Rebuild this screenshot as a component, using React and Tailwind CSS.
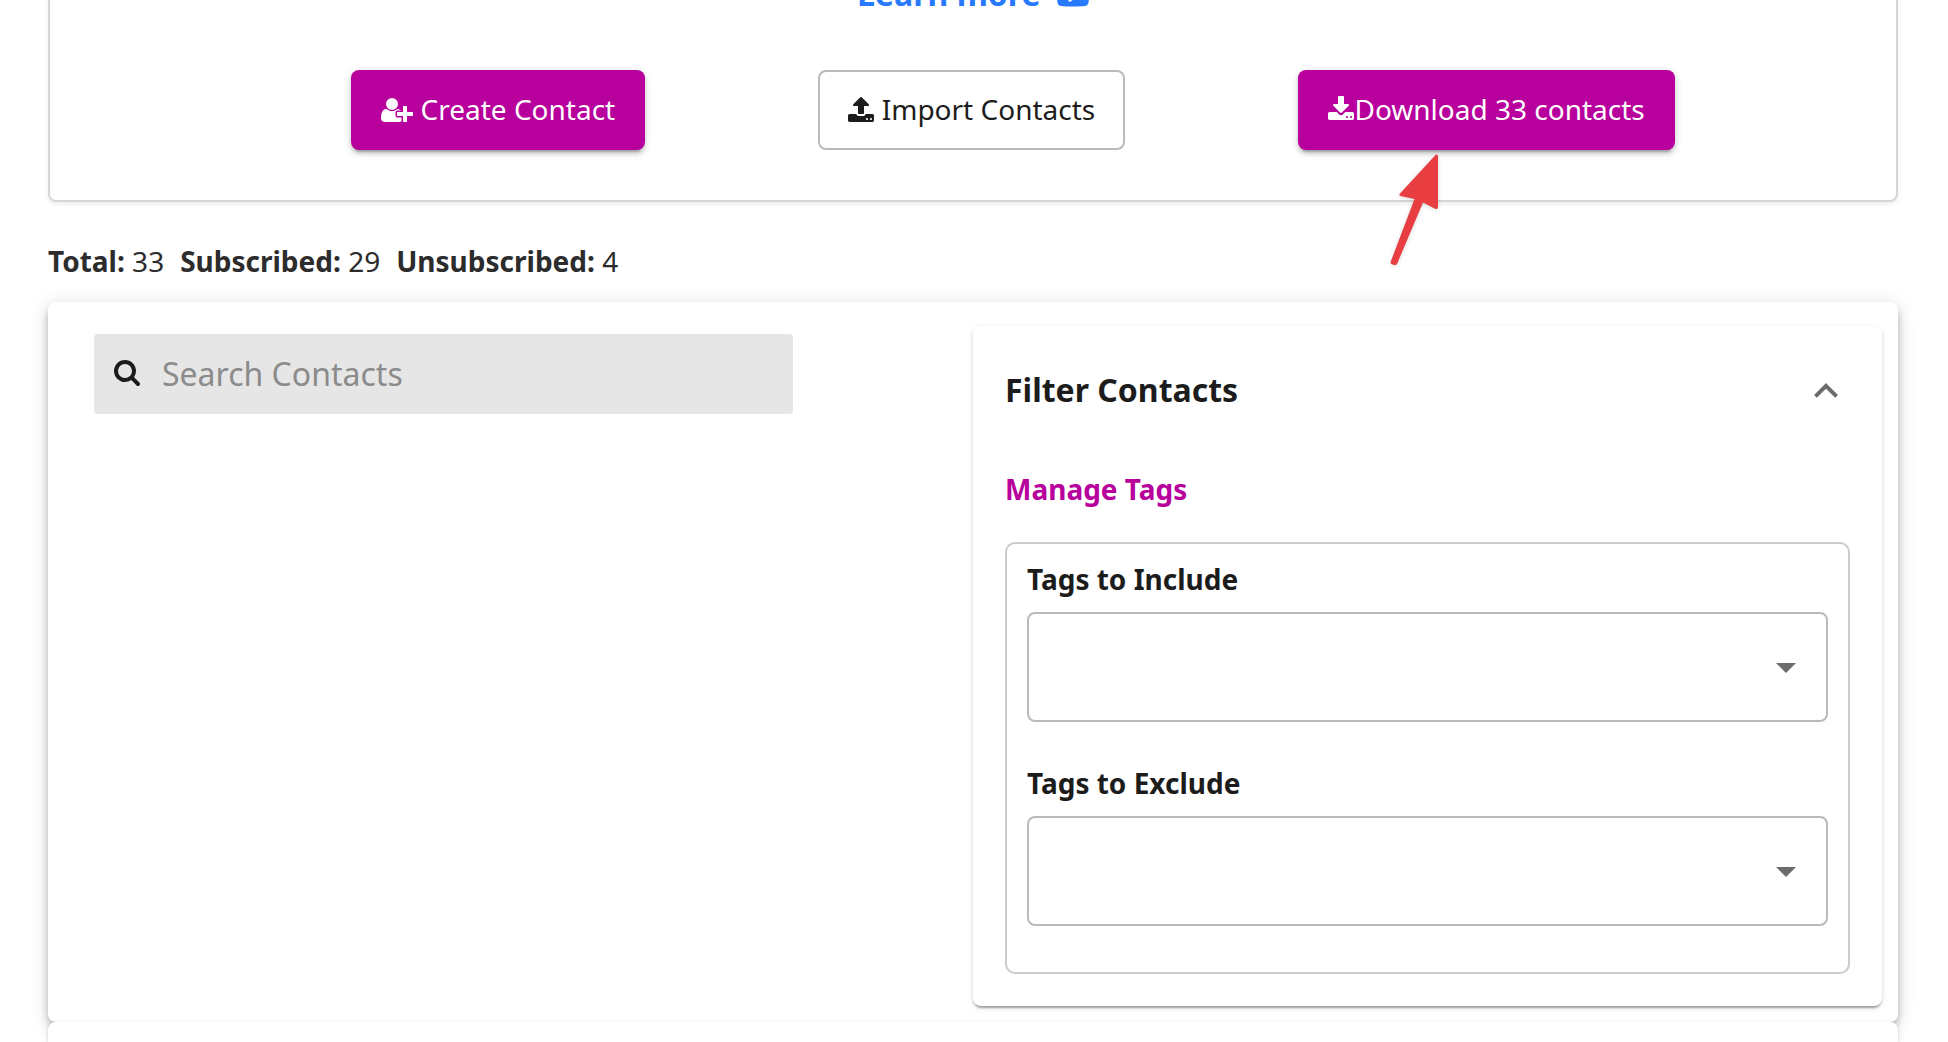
import { useState } from "react";

const icons = {
  userPlus: {
    viewBox: "0 0 2048 1792",
    d: "M704 896q-159 0-271.500-112.500t-112.500-271.500 112.500-271.500 271.500-112.500 271.500 112.500 112.500 271.500-112.500 271.500-271.500 112.500zm960 128h352q13 0 22.500 9.500t9.500 22.500v192q0 13-9.500 22.500t-22.500 9.500h-352v352q0 13-9.500 22.500t-22.500 9.500h-192q-13 0-22.500-9.500t-9.500-22.500v-352h-352q-13 0-22.500-9.500t-9.500-22.500v-192q0-13 9.500-22.500t22.500-9.500h352v-352q0-13 9.500-22.500t22.500-9.500h192q13 0 22.500 9.500t9.500 22.500v352zm-736 224q0 52 38 90t90 38h256v238q-68 50-171 50h-874q-121 0-194-69t-73-190q0-53 3.500-103.500t14-109 26.500-108.500 43-97.500 62-81 85.500-53.500 111.500-20q19 0 39 17 79 61 154.500 91.500t164.500 30.500 164.500-30.500 154.500-91.500q20-17 39-17 132 0 217 96h-223q-52 0-90 38t-38 90v192z",
  },
  upload: {
    viewBox: "64 0 1664 1792",
    d: "M1344 1472q0-26-19-45t-45-19-45 19-19 45 19 45 45 19 45-19 19-45zm256 0q0-26-19-45t-45-19-45 19-19 45 19 45 45 19 45-19 19-45zm128-224v320q0 40-28 68t-68 28h-1472q-40 0-68-28t-28-68v-320q0-40 28-68t68-28h427q21 56 70.500 92t110.500 36h256q61 0 110.500-36t70.500-92h427q40 0 68 28t28 68zm-325-648q-17 40-59 40h-256v448q0 26-19 45t-45 19h-256q-26 0-45-19t-19-45v-448h-256q-42 0-59-40-17-39 14-69l448-448q18-19 45-19t45 19l448 448q31 30 14 69z",
  },
  download: {
    viewBox: "64 0 1664 1792",
    d: "M1344 1344q0-26-19-45t-45-19-45 19-19 45 19 45 45 19 45-19 19-45zm256 0q0-26-19-45t-45-19-45 19-19 45 19 45 45 19 45-19 19-45zm128-224v320q0 40-28 68t-68 28h-1472q-40 0-68-28t-28-68v-320q0-40 28-68t68-28h465l135 136q58 56 136 56t136-56l136-136h464q40 0 68 28t28 68zm-325-569q17 41-14 70l-448 448q-18 19-45 19t-45-19l-448-448q-31-29-14-70 17-39 59-39h256v-448q0-26 19-45t45-19h256q26 0 45 19t19 45v448h256q42 0 59 39z",
  },
  search: {
    viewBox: "64 0 1664 1792",
    d: "M1216 832q0-185-131.500-316.500t-316.500-131.500-316.500 131.500-131.500 316.500 131.500 316.500 316.500 131.500 316.500-131.500 131.500-316.500zm512 832q0 52-38 90t-90 38q-54 0-90-38l-343-342q-179 124-399 124-143 0-273.500-55.500t-225-150-150-225-55.500-273.500 55.500-273.500 150-225 225-150 273.500-55.500 273.500 55.500 225 150 150 225 55.500 273.500q0 220-124 399l343 343q37 37 37 90z",
  },
  video: {
    viewBox: "0 0 1792 1792",
    d: "M1280 896q0-37-30-54l-512-320q-31-20-65-2-33 18-33 56v640q0 38 33 56 16 8 31 8 20 0 34-10l512-320q30-17 30-54zm512 0q0 96-1 150t-8.500 136.500-22.500 147.500q-16 73-69 123t-124 58q-222 25-671 25t-671-25q-71-8-124.500-58t-69.500-123q-14-65-21.500-147.500t-8.500-136.500-1-150 1-150 8.500-136.500 22.500-147.500q16-73 69-123t124-58q222-25 671-25t671 25q71 8 124.500 58t69.500 123q14 65 21.500 147.500t8.500 136.500 1 150z",
  },
};

function Icon({ name, className }) {
  const { viewBox, d } = icons[name];
  return (
    <svg
      viewBox={viewBox}
      fill="currentColor"
      aria-hidden="true"
      className={className}
    >
      <path d={d} />
    </svg>
  );
}

function PointerArrow() {
  return (
    <svg
      viewBox="0 0 48 112"
      aria-hidden="true"
      className="absolute top-[84px] left-[92px] w-12 h-28 overflow-visible drop-shadow-sm pointer-events-none"
    >
      <path
        d="M46 0.500Q48 0 48 2V53Q48 55.500 45.500 55L33 48.500L7 110Q6 111.500 4 111L1.500 110Q0 109 0.800 107.500L24.500 45L10.500 42Q8.500 41 10 39.500Z"
        fill="#e83e42"
      />
    </svg>
  );
}

function TagSelect({ id, label }) {
  return (
    <div className="mb-[42px]">
      <label htmlFor={id} className="block mb-[14px] font-bold">
        {label}
      </label>
      <div className="relative">
        <select
          id={id}
          className="block w-full h-[110px] px-5 appearance-none rounded-lg border-2 border-[#bababa] bg-white"
        >
          <option value=""></option>
        </select>
        <svg
          viewBox="0 0 24 24"
          aria-hidden="true"
          className="absolute right-[18px] inset-y-0 my-auto size-12 text-[#6c6c6c] pointer-events-none"
        >
          <path d="M7 10l5 5 5-5z" fill="currentColor" />
        </svg>
      </div>
    </div>
  );
}

function FilterPanel() {
  const [open, setOpen] = useState(true);

  return (
    <section className="px-8 rounded-lg bg-white shadow-[0_4px_2px_-2px_rgba(0,0,0,0.2),0_2px_2px_0_rgba(0,0,0,0.14),0_2px_6px_0_rgba(0,0,0,0.12)]">
      <button
        type="button"
        aria-expanded={open}
        onClick={() => setOpen(!open)}
        className="flex w-full h-32 items-center justify-between text-[32px] font-bold"
      >
        Filter Contacts
        <svg
          viewBox="0 0 24 24"
          aria-hidden="true"
          className={open ? "size-12 text-[#6c6c6c]" : "size-12 rotate-180 text-[#6c6c6c]"}
        >
          <path
            d="M12 8.500l-6 6 1.410 1.410L12 11.330l4.590 4.580L18 14.500z"
            fill="currentColor"
          />
        </svg>
      </button>
      {open && (
        <div className="pt-4 pb-8">
          <a href="#tags" className="block w-fit font-bold text-[#b7009c]">
            Manage Tags
          </a>
          <div className="mt-[34px] px-5 pt-4 pb-1 rounded-[10px] border-2 border-[#cbcbcb]">
            <TagSelect id="tags-include" label="Tags to Include" />
            <TagSelect id="tags-exclude" label="Tags to Exclude" />
          </div>
        </div>
      )}
    </section>
  );
}

export default function App() {
  return (
    <main className="-mt-[30px] pl-12 pr-[50px] font-['Noto_Sans',sans-serif] text-[28px] leading-[38px] text-[#1c1c1c] bg-white">
      <section className="px-12 pb-[50px] rounded-b-lg border-2 border-t-0 border-[#d6d6d6] shadow-[0_2px_4px_0_rgba(0,0,0,0.08)]">
        <div className="flex justify-center text-[32px] leading-12">
          <a href="#learn" className="font-bold text-[#2979ff]">
            Learn more{" "}
            <Icon name="video" className="inline-block size-8 ml-2 align-[-5px]" />
          </a>
        </div>
        <ul className="flex justify-evenly mt-[52px] pl-20">
          <li>
            <button
              type="button"
              className="h-20 px-[30px] pb-0.5 rounded-lg bg-[#b7009c] text-white shadow-[0_6px_2px_-4px_rgba(0,0,0,0.2),0_4px_4px_0_rgba(0,0,0,0.14),0_2px_10px_0_rgba(0,0,0,0.12)]"
            >
              <Icon name="userPlus" className="inline-block w-8 h-7 align-[-4px]" />{" "}
              Create Contact
            </button>
          </li>
          <li>
            <button
              type="button"
              className="h-20 px-7 pb-0.5 rounded-lg border-2 border-[#bababa] bg-white"
            >
              <Icon name="upload" className="inline-block w-[26px] h-7 align-[-4px]" />{" "}
              Import Contacts
            </button>
          </li>
          <li className="relative">
            <button
              type="button"
              className="h-20 px-[30px] pb-0.5 rounded-lg bg-[#b7009c] text-white shadow-[0_6px_2px_-4px_rgba(0,0,0,0.2),0_4px_4px_0_rgba(0,0,0,0.14),0_2px_10px_0_rgba(0,0,0,0.12)]"
            >
              <Icon name="download" className="inline-block w-[26px] h-7 align-[-4px]" />
              Download 33 contacts
            </button>
            <PointerArrow />
          </li>
        </ul>
      </section>

      <div className="flex gap-4 mt-10 mb-[22px] text-[#2c2c2c]">
        <span>
          <b>Total:</b> 33
        </span>
        <span>
          <b>Subscribed:</b> 29
        </span>
        <span>
          <b>Unsubscribed:</b> 4
        </span>
      </div>

      <section className="grid grid-cols-2 px-4 pt-6 pb-4 rounded-lg bg-white shadow-[0_4px_8px_-2px_rgba(0,0,0,0.2),0_8px_10px_0_rgba(0,0,0,0.14),0_2px_20px_0_rgba(0,0,0,0.12)]">
        <div className="pt-2 pl-[30px] pr-[180px]">
          <label className="flex h-20 items-center gap-[22px] px-5 rounded bg-[#e6e6e6]">
            <Icon name="search" className="w-[26px] h-7 mb-1 shrink-0" />
            <input
              type="search"
              aria-label="Search Contacts"
              placeholder="Search Contacts"
              className="w-full min-w-0 text-[32px] leading-12 bg-transparent outline-none placeholder:text-[#8b8b8b]"
            />
          </label>
        </div>
        <FilterPanel />
      </section>

      <section className="relative h-5 rounded-t-lg bg-white shadow-[0_4px_2px_-2px_rgba(0,0,0,0.2),0_2px_2px_0_rgba(0,0,0,0.14),0_2px_6px_0_rgba(0,0,0,0.12)]"></section>
    </main>
  );
}
